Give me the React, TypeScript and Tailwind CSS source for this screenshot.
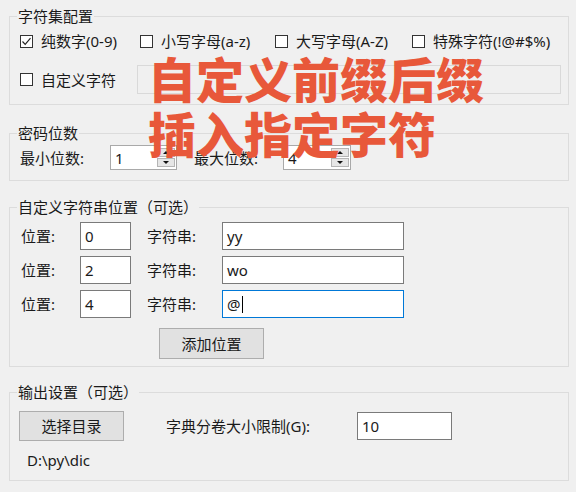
import React from "react";

const font = "font-['Noto_Sans','Noto_Sans_CJK_SC',sans-serif]";

function CheckBox({ checked, label }: { checked?: boolean; label: string }) {
  return (
    <label className="flex items-center gap-[8px]">
      <span className="relative w-[13px] h-[13px] border border-[#333] bg-white">
        {checked && (
          <svg viewBox="0 0 13 13" className="absolute -left-px -top-px w-[13px] h-[13px]">
            <polyline points="2.5,6.5 5.2,9.3 10.5,3.2" fill="none" stroke="#222" strokeWidth="1.2" />
          </svg>
        )}
      </span>
      <span>{label}</span>
    </label>
  );
}

function Entry({ value, w, focused, h = "h-[28px]" }: { value: string; w: string; focused?: boolean; h?: string }) {
  return (
    <div
      className={`${w} ${h} bg-white border flex items-center pl-[4px] ${
        focused ? "border-[#0078d7]" : "border-[#7a7a7a]"
      }`}
    >
      <span>{value}</span>
      {focused && <span className="ml-[1px] w-px h-[17px] bg-black" />}
    </div>
  );
}

function Spin({ value, w }: { value: string; w: string }) {
  return (
    <div className={`${w} h-[25px] bg-white border border-[#a9a9a9] flex items-center pl-[4px] pr-px justify-between`}>
      <span>{value}</span>
      <div className="flex flex-col gap-px">
        <div className="w-[18px] h-[9px] bg-[#e6e6e6] border border-[#b5b5b5] flex items-center justify-center">
          <svg viewBox="0 0 6 3" className="w-[6px] h-[3px]">
            <polygon points="0,3 3,0 6,3" fill="#111" />
          </svg>
        </div>
        <div className="w-[18px] h-[9px] bg-[#e6e6e6] border border-[#b5b5b5] flex items-center justify-center">
          <svg viewBox="0 0 6 3" className="w-[6px] h-[3px]">
            <polygon points="0,0 6,0 3,3" fill="#111" />
          </svg>
        </div>
      </div>
    </div>
  );
}

function Group({ title, className, children }: { title: string; className?: string; children: React.ReactNode }) {
  return (
    <fieldset className={`border border-[#dcdcdc] ${className ?? ""}`}>
      <legend className="ml-[7px] px-px leading-[18px]">{title}</legend>
      {children}
    </fieldset>
  );
}

const positions = [
  { pos: "0", str: "yy" },
  { pos: "2", str: "wo" },
  { pos: "4", str: "@", focused: true },
];

export default function App() {
  return (
    <div className={`relative w-[576px] h-[492px] overflow-hidden bg-[#f0f0f0] pt-[7px] pl-[9px] pr-[7px] text-[15px] leading-[20px] text-[#1a1a1a] ${font}`}>
      {/* 字符集配置 */}
      <Group title="字符集配置" className="pb-[10px]">
        <div className="flex items-center pl-[10px] pt-[6px]">
          <div className="w-[120px]">
            <CheckBox checked label="纯数字(0-9)" />
          </div>
          <div className="w-[135px]">
            <CheckBox label="小写字母(a-z)" />
          </div>
          <div className="w-[137px]">
            <CheckBox label="大写字母(A-Z)" />
          </div>
          <CheckBox label="特殊字符(!@#$%)" />
        </div>
        <div className="flex items-center pl-[10px] mt-[14px]">
          <div className="w-[117px]">
            <CheckBox label="自定义字符" />
          </div>
          <div className="w-[424px] h-[29px] bg-[#f0f0f0] border border-[#d9d9d9]" />
        </div>
      </Group>

      {/* 密码位数 */}
      <Group title="密码位数" className="mt-[19px] pb-[10px]">
        <div className="flex items-center pl-[10px] pt-[3px]">
          <span className="w-[90px]">最小位数:</span>
          <Spin value="1" w="w-[67px]" />
          <span className="ml-[17px] w-[89px]">最大位数:</span>
          <Spin value="4" w="w-[68px]" />
        </div>
      </Group>

      {/* 自定义字符串位置 */}
      <Group title="自定义字符串位置（可选）" className="mt-[17px] pb-[7px]">
        <div className="flex flex-col gap-[6px] pl-[11px] pt-[6px]">
          {positions.map((p) => (
            <div key={p.pos} className="flex items-center">
              <span className="w-[59px]">位置:</span>
              <Entry value={p.pos} w="w-[51px]" />
              <span className="ml-[16px] w-[75px]">字符串:</span>
              <Entry value={p.str} w="w-[182px]" focused={p.focused} />
            </div>
          ))}
        </div>
        <div className="pl-[149px] mt-[10px]">
          <button className="w-[105px] h-[31px] bg-[#e1e1e1] border border-[#adadad]">添加位置</button>
        </div>
      </Group>

      {/* 输出设置 */}
      <Group title="输出设置（可选）" className="mt-[16px] pb-[11px]">
        <div className="flex items-center pl-[9px] pt-[10px]">
          <button className="w-[105px] h-[30px] bg-[#e1e1e1] border border-[#adadad]">选择目录</button>
          <span className="ml-[42px] w-[191px]">字典分卷大小限制(G):</span>
          <Entry value="10" w="w-[95px]" />
        </div>
        <div className="pl-[17px] mt-[10px] leading-[18px]">D:\py\dic</div>
      </Group>

      {/* 叠加标注 */}
      <div className="absolute left-[148px] top-[50px] text-[48px] leading-[55px] font-black text-[#e8583a] font-['Noto_Sans_CJK_SC',sans-serif]">
        <div>自定义前缀后缀</div>
        <div>插入指定字符</div>
      </div>
    </div>
  );
}
